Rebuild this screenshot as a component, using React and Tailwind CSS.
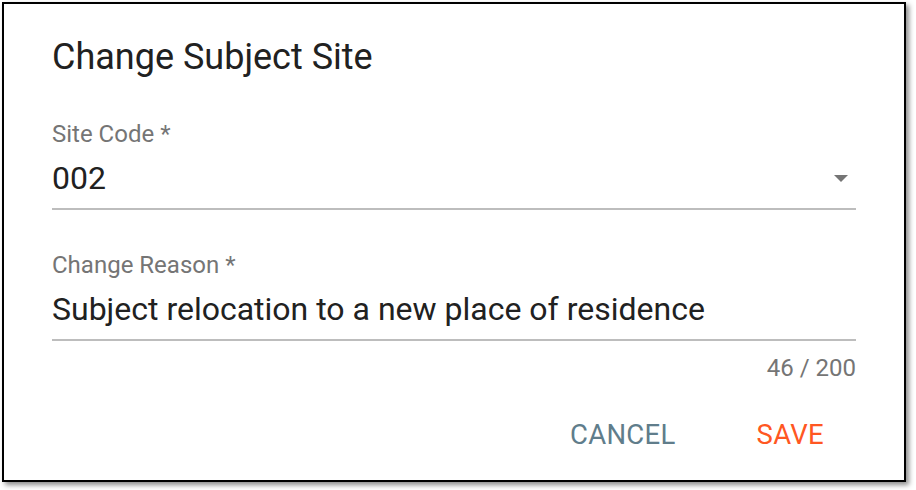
function Field({ label, value, select }) {
  return (
    <div className="flex flex-col">
      <label className="text-[24px] leading-[28px] text-[#757575]">{label}</label>
      <div className="mt-[12px] flex items-center justify-between border-b-2 border-[#bdbdbd] pb-[12px]">
        <span className="text-[32px] leading-[36px] text-[#212121]">{value}</span>
        {select && (
          <svg width="14" height="7" viewBox="0 0 14 7" className="mr-[8px]">
            <path d="M0 0 L14 0 L7 7 Z" fill="#757575" />
          </svg>
        )}
      </div>
    </div>
  );
}

export default function App() {
  return (
    <div className="w-[916px] h-[490px] bg-white pt-[2px] pl-[2px] font-['Roboto',sans-serif]">
      <div className="w-[904px] h-[480px] bg-white border-2 border-black shadow-[3px_3px_5px_rgba(0,0,0,0.45)] flex flex-col pt-[31px] px-[48px]">
        <h2 className="text-[36px] leading-[44px] text-[#212121]">Change Subject Site</h2>

        <div className="mt-[41px]">
          <Field label="Site Code *" value="002" select />
        </div>

        <div className="mt-[41px]">
          <Field label="Change Reason *" value="Subject relocation to a new place of residence" />
        </div>

        <div className="mt-[13px] text-right text-[24px] leading-[28px] text-[#757575]">46 / 200</div>

        <div className="mt-[37px] flex justify-end gap-[49px] pr-[16px]">
          <button className="px-[16px] text-[27.5px] leading-[32px] tracking-[0.3px] text-[#607d8b]">CANCEL</button>
          <button className="px-[16px] text-[27.5px] leading-[32px] tracking-[0.3px] text-[#ff5722]">SAVE</button>
        </div>
      </div>
    </div>
  );
}
